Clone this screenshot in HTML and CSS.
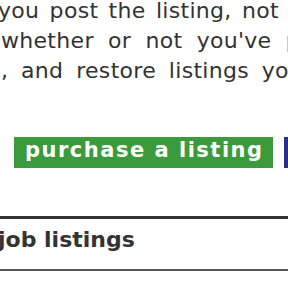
FILE: index.html
```html
<!DOCTYPE html>
<html lang="en">
<head>
    <meta charset="UTF-8">
    <title>job listings</title>
    <link rel="stylesheet" href="styles.css">
</head>
<body>
    <div class="page">
        <div class="intro">
            <div class="line line-1">you post the listing, not only</div>
            <div class="line line-2">whether or not you've paid</div>
            <div class="line line-3">, and restore listings you</div>
        </div>

        <div class="actions">
            <a class="btn btn-green" href="#">purchase a listing</a>
            <a class="btn btn-blue" href="#">manage</a>
        </div>

        <div class="section">
            <h2>job listings</h2>
        </div>
    </div>
</body>
</html>
```

FILE: styles.css
```css
body {
    margin: 0;
    background: #fff;
    color: #333;
    font-family: "DejaVu Sans", Verdana, sans-serif;
    overflow: hidden;
}

.page {
    width: 288px;
    height: 288px;
    overflow: hidden;
}

/* justified paragraph, so each line gets its own word spacing */
.intro {
    margin-top: -4px;
    font-size: 22px;
    line-height: 30px;
    letter-spacing: 0.3px;
    word-spacing: 3px;
}

.line {
    white-space: nowrap;
}

.line-1 { margin-left: -2px; }
.line-2 { margin-left: 1px; word-spacing: 7px; }
.line-3 { margin-left: 1px; word-spacing: 5.5px; }

.actions {
    display: flex;
    gap: 11px;
    margin: 51px 0 0 14px;
    white-space: nowrap;
}

.btn {
    display: block;
    height: 27px;
    line-height: 27px;
    padding: 0 9px 4px 11px;
    color: #fff;
    font-weight: bold;
    font-size: 21px;
    letter-spacing: 1.5px;
    text-decoration: none;
}

.btn-green {
    background: #3b9a3c;
}

.btn-blue {
    background: #2d2d8c;
}

.section {
    margin-top: 48px;
    border-top: 3px solid #333;
    border-bottom: 2px solid #555;
}

.section h2 {
    margin: 0 0 0 -2px;
    padding: 8px 0 16px;
    font-size: 22px;
    line-height: 26px;
    color: #333;
}
```
